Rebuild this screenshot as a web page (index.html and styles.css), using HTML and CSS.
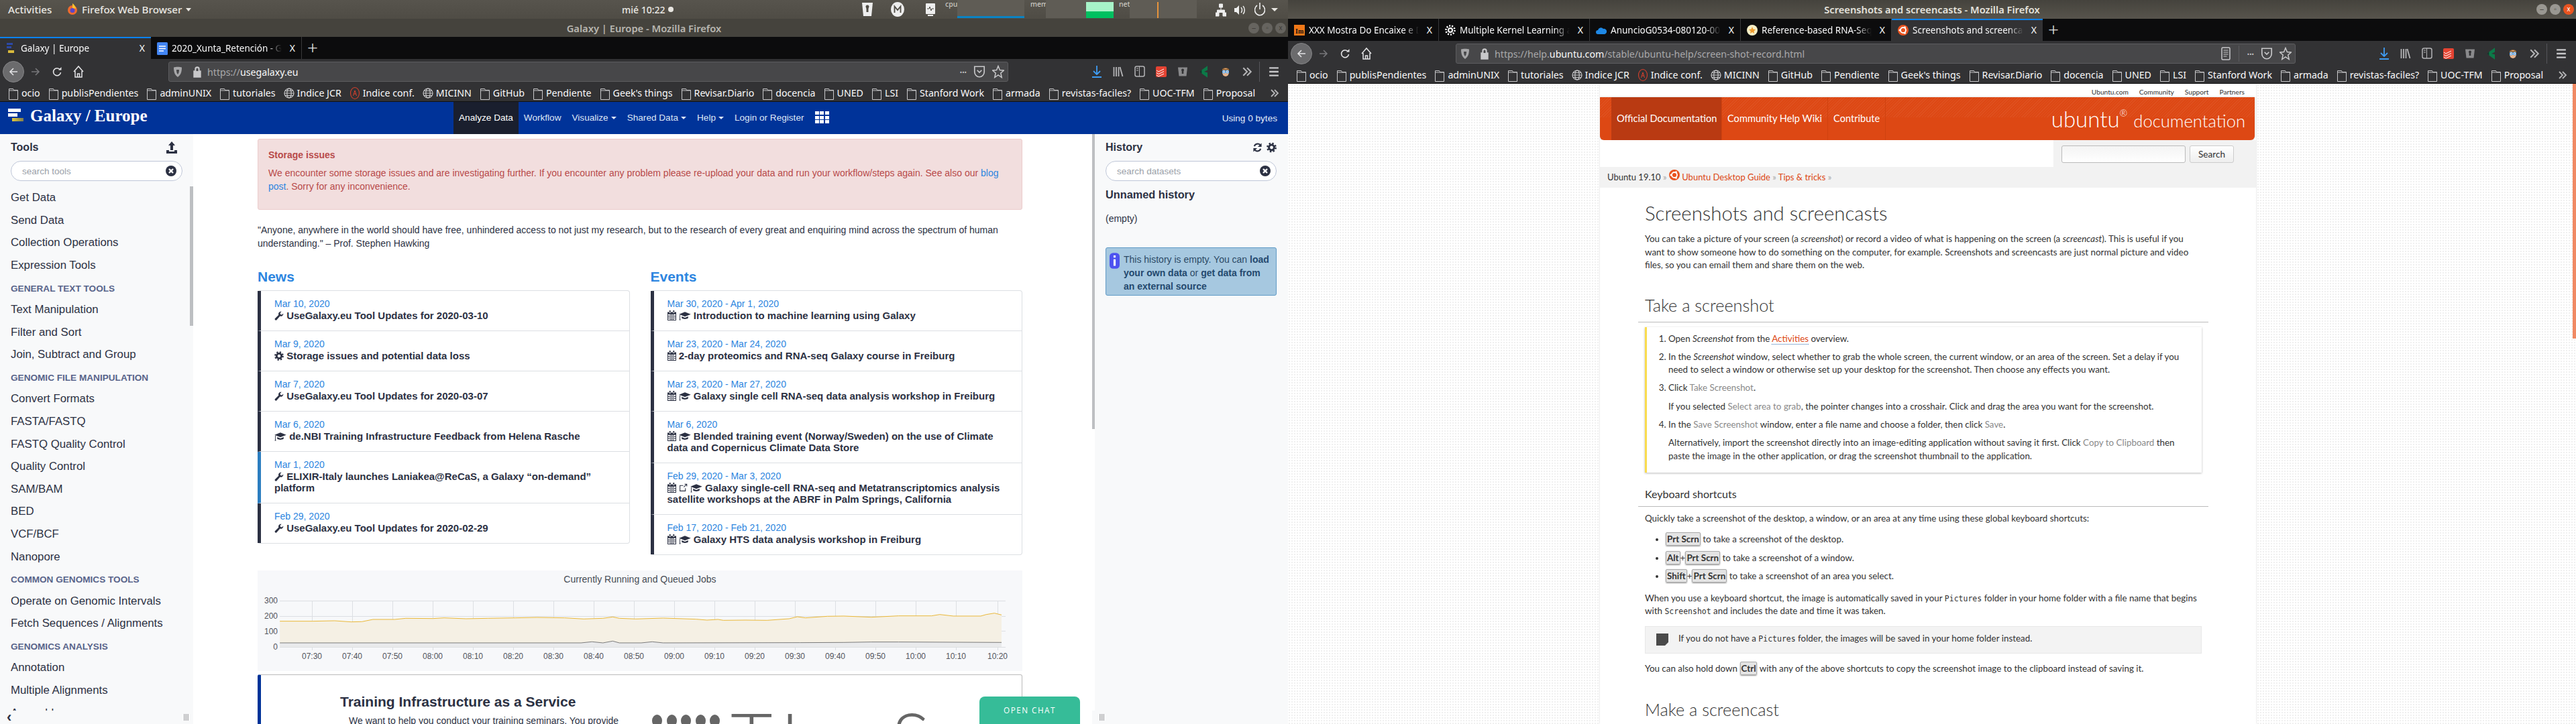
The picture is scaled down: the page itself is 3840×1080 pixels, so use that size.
FILE: index.html
```html
<!DOCTYPE html>
<html>
  <head>
    <meta charset="utf-8" />
    <title>Galaxy | Europe - Mozilla Firefox</title>
    <link rel="stylesheet" href="styles.css">
  </head>
  <body>
    <svg class="defs" width="0" height="0">
      <symbol id="folder" viewBox="0 0 16 20"><path d="M1.5 3.5h6l1 2h6v14h-13z M1.5 6h13" fill="none" stroke="#c8c8ca" stroke-width="1"/></symbol>
      <symbol id="globe" viewBox="0 0 16 20"><g fill="none" stroke="#c8c8ca" stroke-width="1.2"><circle cx="8" cy="10" r="7"/><ellipse cx="8" cy="10" rx="3.2" ry="7"/><path d="M1 10h14M2 6.5h12M2 13.5h12"/></g></symbol>
      <symbol id="conf" viewBox="0 0 16 20"><ellipse cx="8" cy="10" rx="6.5" ry="8.5" fill="none" stroke="#d8402c" stroke-width="1.1"/><path d="M5.5 14l2.5-8 2.5 8M6.5 11h3" fill="none" stroke="#d8402c"/></symbol>
      <symbol id="wrench" viewBox="0 0 16 16"><path d="M15.2 4.2a4.2 4.2 0 0 1-5.6 4.5L3.9 15a1.6 1.6 0 0 1-2.7-2.4l6.1-6A4.2 4.2 0 0 1 12.2.9L9.7 3.3l.7 2.4 2.3.6z"/></symbol>
      <symbol id="cog" viewBox="0 0 16 16"><circle cx="8" cy="8" r="4.2" fill="none" stroke="currentColor" stroke-width="3.2"/><circle cx="8" cy="8" r="6.6" fill="none" stroke="currentColor" stroke-width="2.6" stroke-dasharray="2.6 2.6"/></symbol>
      <symbol id="cap" viewBox="0 0 20 16"><path d="M0 5.5L10 1.5l10 4-10 4zM4.5 9v3c3 2.2 8 2.2 11 0V9L10 11.4zM1 6.5h1V13l.7 2.5H.3L1 13z"/></symbol>
      <symbol id="cal" viewBox="0 0 14 16"><path d="M0 2.5h14V16H0zM1 6v9h12V6zM4 6v9h1V6zM6.5 6v9h1V6zM9 6v9h1V6zM1 8.5h12v1H1zM1 11.5h12v1H1zM3 0h2v4H3zM9 0h2v4H9z" fill-rule="evenodd"/></symbol>
      <symbol id="ext" viewBox="0 0 16 16"><path d="M12 9v5H2V4h6M9 7l5.5-5.5M10.5 1.5h4v4" fill="none" stroke="currentColor" stroke-width="1.3"/></symbol>
      <symbol id="clear" viewBox="0 0 16 16"><circle cx="8" cy="8" r="8"/><path d="M5 5l6 6M11 5l-6 6" stroke="#fff" stroke-width="2.4"/></symbol>
      <symbol id="back" viewBox="0 0 16 16"><path d="M14 8H3M8 3L3 8l5 5" fill="none" stroke="currentColor" stroke-width="1.6"/></symbol>
      <symbol id="reload" viewBox="0 0 16 16"><path d="M12.5 5A5.5 5.5 0 1 0 13.5 9" fill="none" stroke="currentColor" stroke-width="1.6"/><path d="M10 5.5h4.5V1z" fill="currentColor"/></symbol>
      <symbol id="home" viewBox="0 0 16 20"><path d="M1 10l7-8 7 8M3 9v9h10V9M6.5 18v-5h3v5" fill="none" stroke="currentColor" stroke-width="1.5"/></symbol>
      <symbol id="shield" viewBox="0 0 14 18"><path d="M1 2.5C4 1.5 10 1.5 13 2.5c0 6-1 11-6 14.5C2 13.5 1 8.5 1 2.5zM5 6h4c0 3-.5 5-2 7-1.5-2-2-4-2-7z" fill="#a6a6a8" fill-rule="evenodd"/></symbol>
      <symbol id="lock" viewBox="0 0 12 18"><path d="M1 8h10v9H1zM3 8V5a3 3 0 0 1 6 0v3" fill="#c8c8ca" stroke="#c8c8ca" stroke-width="1.4"/><path d="M4.5 8V5a1.5 1.5 0 0 1 3 0v3z" fill="#474749"/></symbol>
      <symbol id="pocket" viewBox="0 0 16 18"><path d="M1.5 2h13v7a6.5 7 0 0 1-13 0zM5 7l3 3 3-3" fill="none" stroke="#c8c8ca" stroke-width="1.5"/></symbol>
      <symbol id="star" viewBox="0 0 18 20"><path d="M9 1.5l2.4 6 6 .5-4.6 4 1.4 6.5L9 15l-5.2 3.5L5.2 12 .6 8l6-.5z" fill="none" stroke="#c8c8ca" stroke-width="1.5"/></symbol>
      <symbol id="download" viewBox="0 0 16 20"><path d="M8 1v13M3 9l5 5 5-5" fill="none" stroke="#3f9cf2" stroke-width="1.8"/><path d="M1 18h14" stroke="#3f9cf2" stroke-width="2"/></symbol>
      <symbol id="library" viewBox="0 0 16 20"><path d="M1.5 3v14M5 3v14M8.5 3v14M10.5 3l4 14" fill="none" stroke="#b4b4b6" stroke-width="1.8"/></symbol>
      <symbol id="sidebar" viewBox="0 0 16 20"><rect x="1" y="2" width="14" height="15" rx="2.5" fill="none" stroke="#b4b4b6" stroke-width="1.5"/><path d="M7.5 2v15M3 5h3M3 8h3" stroke="#b4b4b6"/></symbol>
      <symbol id="todoist" viewBox="0 0 16 16"><rect width="16" height="16" rx="2" fill="#e44332"/><path d="M1 6l3 2 8-4M1 9.5l3 2 8-4M1 13l3 2 8-4" fill="none" stroke="#fff"/></symbol>
      <symbol id="keeper" viewBox="0 0 16 16"><path d="M1 1.5h14l-1.5 13h-11z" fill="#8a8a8c"/><path d="M6 5.5a2 2 0 1 1 4 0l-.7 2V11H6.7V7.5z" fill="#323234"/></symbol>
      <symbol id="leaf" viewBox="0 0 12 16"><path d="M10 1L3 6v4l7 5V9L6 8l4-2z" fill="#0c7a48"/><path d="M3 6L1 8l2 2z" fill="#0b3d2a"/></symbol>
      <symbol id="avatar" viewBox="0 0 16 18"><path d="M3 7C2 2 14 2 13 7v3H3z" fill="#a06a34"/><ellipse cx="8" cy="10" rx="5" ry="6" fill="#e8b48c"/><path d="M3 5h10v3H3z" fill="#a06a34"/><circle cx="5.5" cy="9" r="2.2" fill="#fff" stroke="#3f9cf2"/><circle cx="10.5" cy="9" r="2.2" fill="#fff" stroke="#3f9cf2"/><circle cx="5.5" cy="9" r=".8" fill="#246"/><circle cx="10.5" cy="9" r=".8" fill="#246"/></symbol>
      <symbol id="more" viewBox="0 0 14 16"><path d="M2 3l5 5-5 5M7 3l5 5-5 5" fill="none" stroke="#b4b4b6" stroke-width="1.8"/></symbol>
      <symbol id="menu" viewBox="0 0 14 16"><path d="M1 3h12M1 8h12M1 13h12" stroke="#c8c8ca" stroke-width="2"/></symbol>
      <symbol id="glogo" viewBox="0 0 24 20"><path d="M0 0h19v5H0z" fill="#fff"/><path d="M0 7h14v5H0z" fill="#fff"/><path d="M6 14h17v5H6z" fill="url(#gold)"/></symbol>
      <symbol id="gfav" viewBox="0 0 16 20"><path d="M1 2h9v3H1z" fill="#2c49a8"/><path d="M1 7h7v3H1z" fill="#2c49a8"/><path d="M3 13h9v4H3z" fill="#d8b93c"/></symbol>
      <symbol id="ubu" viewBox="0 0 16 16"><circle cx="8" cy="8" r="8" fill="#e95420"/><circle cx="8" cy="8" r="4" fill="none" stroke="#fff" stroke-width="1.8"/><circle cx="3" cy="8" r="1.5" fill="#fff"/><circle cx="10.5" cy="3.7" r="1.5" fill="#fff"/><circle cx="10.5" cy="12.3" r="1.5" fill="#fff"/></symbol>
      <linearGradient id="gold" x1="0" x2="1"><stop offset="0" stop-color="#e4c83c"/><stop offset="1" stop-color="#7f7f50"/></linearGradient>
    </svg>

    <div class="desktop">
      <!-- left half: galaxy -->
      <div class="screen">
        <div class="panel">
          <span class="panel-item">Activities</span>
          <span class="panel-app">
            <svg class="panel-fox" viewBox="0 0 16 20"><circle cx="8" cy="11" r="7" fill="#ee6b2f"/><circle cx="8" cy="11.5" r="3.5" fill="#5a46c8"/><path d="M8 1c3 2 5 5 5 8l-5-1z" fill="#fbc02d"/></svg>
            Firefox Web Browser <i class="caret caret-panel"></i>
          </span>
          <span class="panel-clock">mié 10:22 <i class="dot"></i></span>
          <span class="tray">
            <svg class="tray-icon" viewBox="0 0 18 24"><path d="M1 2h16l-2 20H3z" fill="#eee"/><path d="M6.5 8a2.5 2.5 0 1 1 5 0l-1 3v5h-3v-5z" fill="#4f4c45"/></svg>
            <svg class="tray-icon tray-m" viewBox="0 0 20 24"><ellipse cx="10" cy="12" rx="10" ry="11" fill="#eee"/><path d="M5.5 17V7.5L10 13l4.5-5.5V17" fill="none" stroke="#4f4c45" stroke-width="1.8"/></svg>
            <svg class="tray-icon tray-mon" viewBox="0 0 16 24"><rect x="1" y="3" width="14" height="16" rx="1" fill="#eee"/><path d="M3 11h3l1-3 2 6 1-3h3" fill="none" stroke="#4f4c45"/><path d="M4 21h8" stroke="#eee" stroke-width="2"/></svg>
            <span class="graph-label">cpu</span>
            <span class="graph graph-cpu"></span>
            <span class="graph-label">mem</span>
            <span class="graph graph-mem"></span>
            <span class="graph-label">net</span>
            <span class="graph graph-net"></span>
            <svg class="tray-icon tray-net" viewBox="0 0 16 20"><path d="M5.5 1h5v5h-5zM0 14h5v5H0zM11 14h5v5h-5zM8 6v4M2.5 14v-4h11v4" fill="#eee" stroke="#eee"/></svg>
            <svg class="tray-icon tray-vol" viewBox="0 0 16 20"><path d="M0 7h3l4-4v14l-4-4H0z" fill="#eee"/><path d="M10 6c2 2 2 6 0 8M13 4c3 3 3 9 0 12" fill="none" stroke="#eee" stroke-width="1.5"/></svg>
            <svg class="tray-icon tray-pow" viewBox="0 0 16 24"><path d="M8 2v10M4 6a7.5 8 0 1 0 8 0" fill="none" stroke="#eee" stroke-width="1.6"/></svg>
            <i class="caret caret-tray"></i>
          </span>
        </div>
        <div class="titlebar titlebar-off">
          <span class="titlebar-text">Galaxy | Europe - Mozilla Firefox</span>
          <span class="wbtns"><i class="wbtn">–</i><i class="wbtn">▫</i><i class="wbtn">x</i></span>
        </div>
        <div class="tabs">
          <div class="tab tab-on"><svg class="tab-icon"><use href="#gfav"/></svg><span class="tab-title">Galaxy | Europe</span><span class="tab-x">X</span></div>
          <div class="tab"><svg class="tab-icon" viewBox="0 0 16 20"><rect y="1" width="16" height="19" rx="1.5" fill="#4285f4"/><path d="M3 7h10M3 10.5h10M3 14h7" stroke="#fff" stroke-width="1.5"/></svg><span class="tab-title">2020_Xunta_Retención - Go</span><span class="tab-x">X</span></div>
          <span class="tab-new">+</span>
        </div>
        <div class="nav">
          <span class="nav-back"><svg class="nav-icon"><use href="#back"/></svg></span>
          <svg class="nav-icon nav-fwd"><use href="#back"/></svg>
          <svg class="nav-icon"><use href="#reload"/></svg>
          <svg class="nav-icon"><use href="#home"/></svg>
          <div class="urlbar">
            <svg class="url-shield"><use href="#shield"/></svg>
            <svg class="url-lock"><use href="#lock"/></svg>
            <span class="url-text">https://<b>usegalaxy.eu</b></span>
            <span class="url-actions"><span class="url-dots">•••</span><svg class="url-act"><use href="#pocket"/></svg><svg class="url-act"><use href="#star"/></svg></span>
          </div>
          <div class="toolbar">
            <svg class="tool-btn"><use href="#download"/></svg>
            <svg class="tool-btn"><use href="#library"/></svg>
            <svg class="tool-btn"><use href="#sidebar"/></svg>
            <svg class="tool-btn"><use href="#todoist"/></svg>
            <svg class="tool-btn"><use href="#keeper"/></svg>
            <svg class="tool-btn"><use href="#leaf"/></svg>
            <svg class="tool-btn"><use href="#avatar"/></svg>
            <svg class="tool-btn"><use href="#more"/></svg>
            <i class="tool-sep"></i>
            <svg class="tool-btn tool-menu"><use href="#menu"/></svg>
          </div>
        </div>
        <div class="bookmarks">
          <span class="bm"><svg><use href="#folder"/></svg>ocio</span>
          <span class="bm"><svg><use href="#folder"/></svg>publisPendientes</span>
          <span class="bm"><svg><use href="#folder"/></svg>adminUNIX</span>
          <span class="bm"><svg><use href="#folder"/></svg>tutoriales</span>
          <span class="bm"><svg><use href="#globe"/></svg>Indice JCR</span>
          <span class="bm"><svg><use href="#conf"/></svg>Indice conf.</span>
          <span class="bm"><svg><use href="#globe"/></svg>MICINN</span>
          <span class="bm"><svg><use href="#folder"/></svg>GitHub</span>
          <span class="bm"><svg><use href="#folder"/></svg>Pendiente</span>
          <span class="bm"><svg><use href="#folder"/></svg>Geek's things</span>
          <span class="bm"><svg><use href="#folder"/></svg>Revisar.Diario</span>
          <span class="bm"><svg><use href="#folder"/></svg>docencia</span>
          <span class="bm"><svg><use href="#folder"/></svg>UNED</span>
          <span class="bm"><svg><use href="#folder"/></svg>LSI</span>
          <span class="bm"><svg><use href="#folder"/></svg>Stanford Work</span>
          <span class="bm"><svg><use href="#folder"/></svg>armada</span>
          <span class="bm"><svg><use href="#folder"/></svg>revistas-faciles?</span>
          <span class="bm"><svg><use href="#folder"/></svg>UOC-TFM</span>
          <span class="bm"><svg><use href="#folder"/></svg>Proposal</span>
          <svg class="bm-more"><use href="#more"/></svg>
        </div>

        <div class="masthead">
          <svg class="gx-logo"><use href="#glogo"/></svg>
          <span class="gx-brand">Galaxy / Europe</span>
          <a class="mh-link mh-active">Analyze Data</a>
          <a class="mh-link">Workflow</a>
          <a class="mh-link">Visualize<i class="caret"></i></a>
          <a class="mh-link">Shared Data<i class="caret"></i></a>
          <a class="mh-link">Help<i class="caret"></i></a>
          <a class="mh-link">Login or Register</a>
          <span class="mh-grid"><i></i><i></i><i></i><i></i><i></i><i></i><i></i><i></i><i></i></span>
          <span class="mh-quota">Using 0 bytes</span>
        </div>

        <div class="gx-body">
          <div class="side side-tools">
            <div class="side-head"><b>Tools</b>
              <svg class="side-upload" viewBox="0 0 16 18"><path d="M8 0l5 6H10v7H6V6H3zM0 13h4v2h8v-2h4v5H0z" fill="#2c3143"/></svg>
            </div>
            <div class="search"><span>search tools</span><svg class="search-x"><use href="#clear"/></svg></div>
            <div class="tool-list">
              <div class="tool-item">Get Data</div>
              <div class="tool-item">Send Data</div>
              <div class="tool-item">Collection Operations</div>
              <div class="tool-item">Expression Tools</div>
              <div class="tool-label">GENERAL TEXT TOOLS</div>
              <div class="tool-item">Text Manipulation</div>
              <div class="tool-item">Filter and Sort</div>
              <div class="tool-item">Join, Subtract and Group</div>
              <div class="tool-label">GENOMIC FILE MANIPULATION</div>
              <div class="tool-item">Convert Formats</div>
              <div class="tool-item">FASTA/FASTQ</div>
              <div class="tool-item">FASTQ Quality Control</div>
              <div class="tool-item">Quality Control</div>
              <div class="tool-item">SAM/BAM</div>
              <div class="tool-item">BED</div>
              <div class="tool-item">VCF/BCF</div>
              <div class="tool-item">Nanopore</div>
              <div class="tool-label">COMMON GENOMICS TOOLS</div>
              <div class="tool-item">Operate on Genomic Intervals</div>
              <div class="tool-item">Fetch Sequences / Alignments</div>
              <div class="tool-label">GENOMICS ANALYSIS</div>
              <div class="tool-item">Annotation</div>
              <div class="tool-item">Multiple Alignments</div>
              <div class="tool-item">Assembly</div>
            </div>
            <i class="side-thumb"></i>
            <div class="side-foot"><span class="side-arrow">‹</span><span class="side-handle"></span></div>
          </div>

          <div class="main">
            <div class="alert">
              <h4>Storage issues</h4>
              <p>We encounter some storage issues and are investigating further. If you encounter any problem please re-upload your data and run your workflow/steps again. See also our <a>blog post</a>. Sorry for any inconvenience.</p>
            </div>
            <p class="quote">"Anyone, anywhere in the world should have free, unhindered access to not just my research, but to the research of every great and enquiring mind across the spectrum of human understanding." – Prof. Stephen Hawking</p>
            <div class="columns">
              <div>
                <h2 class="col-title">News</h2>
                <div class="feed">
                  <div class="feed-item"><a>Mar 10, 2020</a><b><svg class="ic"><use href="#wrench"/></svg> UseGalaxy.eu Tool Updates for 2020-03-10</b></div>
                  <div class="feed-item"><a>Mar 9, 2020</a><b><svg class="ic"><use href="#cog"/></svg> Storage issues and potential data loss</b></div>
                  <div class="feed-item"><a>Mar 7, 2020</a><b><svg class="ic"><use href="#wrench"/></svg> UseGalaxy.eu Tool Updates for 2020-03-07</b></div>
                  <div class="feed-item"><a>Mar 6, 2020</a><b><svg class="ic ic-cap"><use href="#cap"/></svg> de.NBI Training Infrastructure Feedback from Helena Rasche</b></div>
                  <div class="feed-item feed-blue"><a>Mar 1, 2020</a><b><svg class="ic"><use href="#wrench"/></svg> ELIXIR-Italy launches Laniakea@ReCaS, a Galaxy “on-demand” platform</b></div>
                  <div class="feed-item"><a>Feb 29, 2020</a><b><svg class="ic"><use href="#wrench"/></svg> UseGalaxy.eu Tool Updates for 2020-02-29</b></div>
                </div>
              </div>
              <div>
                <h2 class="col-title">Events</h2>
                <div class="feed">
                  <div class="feed-item"><a>Mar 30, 2020 - Apr 1, 2020</a><b><svg class="ic ic-cal"><use href="#cal"/></svg> <svg class="ic ic-cap"><use href="#cap"/></svg> Introduction to machine learning using Galaxy</b></div>
                  <div class="feed-item"><a>Mar 23, 2020 - Mar 24, 2020</a><b><svg class="ic ic-cal"><use href="#cal"/></svg> 2-day proteomics and RNA-seq Galaxy course in Freiburg</b></div>
                  <div class="feed-item"><a>Mar 23, 2020 - Mar 27, 2020</a><b><svg class="ic ic-cal"><use href="#cal"/></svg> <svg class="ic ic-cap"><use href="#cap"/></svg> Galaxy single cell RNA-seq data analysis workshop in Freiburg</b></div>
                  <div class="feed-item"><a>Mar 6, 2020</a><b><svg class="ic ic-cal"><use href="#cal"/></svg> <svg class="ic ic-cap"><use href="#cap"/></svg> Blended training event (Norway/Sweden) on the use of Climate data and Copernicus Climate Data Store</b></div>
                  <div class="feed-item"><a>Feb 29, 2020 - Mar 3, 2020</a><b><svg class="ic ic-cal"><use href="#cal"/></svg> <svg class="ic ic-cal"><use href="#ext"/></svg> <svg class="ic ic-cap"><use href="#cap"/></svg> Galaxy single-cell RNA-seq and Metatranscriptomics analysis satellite workshops at the ABRF in Palm Springs, California</b></div>
                  <div class="feed-item"><a>Feb 17, 2020 - Feb 21, 2020</a><b><svg class="ic ic-cal"><use href="#cal"/></svg> <svg class="ic ic-cap"><use href="#cap"/></svg> Galaxy HTS data analysis workshop in Freiburg</b></div>
                </div>
              </div>
            </div>

            <div class="chart">
              <div class="chart-title">Currently Running and Queued Jobs</div>
              <svg class="chart-svg" viewBox="0 26 1140 124" width="1140" height="124">
                <g stroke="#dcdfe3" stroke-width="1">
                  <path d="M33 45.5H1115M33 68.5H1115M33 90.5H1115M33 114.5H1115"/>
                  <path d="M81.5 45v74M141.5 45v74M201.5 45v74M261.5 45v74M321.5 45v74M381.5 45v74M441.5 45v74M501.5 45v74M561.5 45v74M621.5 45v74M681.5 45v74M741.5 45v74M801.5 45v74M861.5 45v74M921.5 45v74M981.5 45v74M1041.5 45v74M1103.5 45v74"/>
                </g>
                <g transform="translate(-24,-11) scale(.8163,.3333)">
                  <path d="M70 260L130 260 170 258 200 263 220 262 240 252 280 252 300 247 350 248 370 245 410 249 450 247 500 245 540 243 590 245 625 250 660 247 678 241 690 247 720 250 770 246 830 251 850 255 870 252 880 256 920 255 960 256 1000 249 1015 240 1030 245 1070 238 1100 237 1150 242 1200 236 1260 236 1275 230 1300 237 1350 237 1360 230 1375 224 1388 232V374H70Z" fill="#f5f0e4"/>
                  <path d="M70 357H620L640 352 660 357 678 349 690 357 730 357 750 352 770 357 1020 356 1100 355 1150 353 1200 353 1388 355V374H70Z" fill="#e9eaec"/>
                  <path d="M70 260L130 260 170 258 200 263 220 262 240 252 280 252 300 247 350 248 370 245 410 249 450 247 500 245 540 243 590 245 625 250 660 247 678 241 690 247 720 250 770 246 830 251 850 255 870 252 880 256 920 255 960 256 1000 249 1015 240 1030 245 1070 238 1100 237 1150 242 1200 236 1260 236 1275 230 1300 237 1350 237 1360 230 1375 224 1388 232" fill="none" stroke="#eab839" stroke-width="1" vector-effect="non-scaling-stroke"/>
                  <path d="M70 357H620L640 352 660 357 678 349 690 357 730 357 750 352 770 357 1020 356 1100 355 1150 353 1200 353 1388 355" fill="none" stroke="#7b7b7b" stroke-width="1" vector-effect="non-scaling-stroke"/>
                </g>
                <g class="chart-y" text-anchor="end">
                  <text x="30" y="49">300</text><text x="30" y="72">200</text><text x="30" y="95">100</text><text x="30" y="118">0</text>
                </g>
                <g class="chart-x" text-anchor="middle">
                  <text x="81" y="132">07:30</text><text x="141" y="132">07:40</text><text x="201" y="132">07:50</text><text x="261" y="132">08:00</text><text x="321" y="132">08:10</text><text x="381" y="132">08:20</text><text x="441" y="132">08:30</text><text x="501" y="132">08:40</text><text x="561" y="132">08:50</text><text x="621" y="132">09:00</text><text x="681" y="132">09:10</text><text x="741" y="132">09:20</text><text x="801" y="132">09:30</text><text x="861" y="132">09:40</text><text x="921" y="132">09:50</text><text x="981" y="132">10:00</text><text x="1041" y="132">10:10</text><text x="1103" y="132">10:20</text>
                </g>
              </svg>
            </div>

            <div class="promo">
              <div class="promo-text">
                <h3>Training Infrastructure as a Service</h3>
                <p>We want to help you conduct your training seminars. You provide</p>
              </div>
              <div class="promo-logo">
                <span class="promo-dots"><i></i><i></i><i></i><i></i><i></i></span>
                <span class="promo-word">TIaaS</span>
              </div>
            </div>
            <span class="chat-btn">OPEN CHAT</span>
          </div>

          <div class="side side-history">
            <i class="hist-thumb"></i>
            <div class="side-head"><b>History</b>
              <span class="side-tools-icons">
                <svg viewBox="0 0 16 16" class="hist-ic"><path d="M13 5A5.5 5.5 0 0 0 3 6M3 11a5.5 5.5 0 0 0 10-1" fill="none" stroke="#2c3143" stroke-width="2.2"/><path d="M14.5 1v6h-6zM1.5 15V9h6z" fill="#2c3143"/></svg>
                <svg class="hist-ic"><use href="#cog"/></svg>
              </span>
            </div>
            <div class="search"><span>search datasets</span><svg class="search-x"><use href="#clear"/></svg></div>
            <div class="hist-name">Unnamed history</div>
            <div class="hist-empty">(empty)</div>
            <div class="hist-info">
              <svg class="hist-i" viewBox="0 0 14 22"><rect width="14" height="22" rx="5" fill="#4d52f0"/><path d="M7 3.5v3M7 9v9" stroke="#fff" stroke-width="3"/></svg>
              <div>This history is empty. You can <b>load your own data</b> or <b>get data from an external source</b></div>
            </div>
            <div class="side-foot side-foot-r"><span class="side-handle"></span></div>
          </div>
        </div>
      </div>

      <!-- right half: ubuntu help -->
      <div class="screen">
        <div class="titlebar titlebar-on">
          <span class="titlebar-text">Screenshots and screencasts - Mozilla Firefox</span>
          <span class="wbtns"><i class="wbtn">–</i><i class="wbtn">▫</i><i class="wbtn wbtn-close">x</i></span>
        </div>
        <div class="tabs">
          <div class="tab"><svg class="tab-icon" viewBox="0 0 16 20"><rect y="2" width="16" height="16" fill="#f07818"/><text x="2" y="15" font-size="10" font-family="Liberation Serif" font-weight="bold" fill="#111">Im</text></svg><span class="tab-title">XXX Mostra Do Encaixe e Da</span><span class="tab-x">X</span></div>
          <div class="tab"><svg class="tab-icon" viewBox="0 0 16 16"><circle cx="8" cy="8" r="4" fill="#fff"/><circle cx="8" cy="8" r="6.5" fill="none" stroke="#fff" stroke-width="2.6" stroke-dasharray="2 2"/><circle cx="8" cy="8" r="2" fill="#222"/></svg><span class="tab-title">Multiple Kernel Learning al</span><span class="tab-x">X</span></div>
          <div class="tab"><svg class="tab-icon" viewBox="0 0 16 16"><path d="M3 14a3 3 0 0 1 0-6 4.5 4.5 0 0 1 8-2 4 4 0 0 1 2 8z" fill="#1e88e5"/></svg><span class="tab-title">AnuncioG0534-080120-0001</span><span class="tab-x">X</span></div>
          <div class="tab"><svg class="tab-icon" viewBox="0 0 16 16"><circle cx="8" cy="8" r="8" fill="#f6efc6"/><path d="M8 3l1.5 3.5L13 7l-2.5 2.5.6 3.5L8 11l-3 2 .6-3.5L3 7l3.5-.5z" fill="#ef9b2d"/></svg><span class="tab-title">Reference-based RNA-Seq a</span><span class="tab-x">X</span></div>
          <div class="tab tab-on"><svg class="tab-icon tab-ubu"><use href="#ubu"/></svg><span class="tab-title">Screenshots and screencasts</span><span class="tab-x">X</span></div>
          <span class="tab-new">+</span>
        </div>
        <div class="nav nav-right">
          <span class="nav-back"><svg class="nav-icon"><use href="#back"/></svg></span>
          <svg class="nav-icon nav-fwd"><use href="#back"/></svg>
          <svg class="nav-icon"><use href="#reload"/></svg>
          <svg class="nav-icon"><use href="#home"/></svg>
          <div class="urlbar">
            <svg class="url-shield"><use href="#shield"/></svg>
            <svg class="url-lock"><use href="#lock"/></svg>
            <span class="url-text">https://help.<b>ubuntu.com</b>/stable/ubuntu-help/screen-shot-record.html</span>
            <span class="url-actions">
              <svg class="url-act url-reader" viewBox="0 0 14 20"><rect x="1" y="1" width="12" height="18" rx="1.5" fill="none" stroke="#c8c8ca" stroke-width="1.5"/><path d="M3.5 5h7M3.5 8h7M3.5 11h7M3.5 14h5" stroke="#c8c8ca"/></svg>
              <i class="url-sep"></i>
              <span class="url-dots">•••</span><svg class="url-act"><use href="#pocket"/></svg><svg class="url-act"><use href="#star"/></svg>
            </span>
          </div>
          <div class="toolbar">
            <svg class="tool-btn"><use href="#download"/></svg>
            <svg class="tool-btn"><use href="#library"/></svg>
            <svg class="tool-btn"><use href="#sidebar"/></svg>
            <svg class="tool-btn"><use href="#todoist"/></svg>
            <svg class="tool-btn"><use href="#keeper"/></svg>
            <svg class="tool-btn"><use href="#leaf"/></svg>
            <svg class="tool-btn"><use href="#avatar"/></svg>
            <svg class="tool-btn"><use href="#more"/></svg>
            <i class="tool-sep"></i>
            <svg class="tool-btn tool-menu"><use href="#menu"/></svg>
          </div>
        </div>
        <div class="bookmarks">
          <span class="bm"><svg><use href="#folder"/></svg>ocio</span>
          <span class="bm"><svg><use href="#folder"/></svg>publisPendientes</span>
          <span class="bm"><svg><use href="#folder"/></svg>adminUNIX</span>
          <span class="bm"><svg><use href="#folder"/></svg>tutoriales</span>
          <span class="bm"><svg><use href="#globe"/></svg>Indice JCR</span>
          <span class="bm"><svg><use href="#conf"/></svg>Indice conf.</span>
          <span class="bm"><svg><use href="#globe"/></svg>MICINN</span>
          <span class="bm"><svg><use href="#folder"/></svg>GitHub</span>
          <span class="bm"><svg><use href="#folder"/></svg>Pendiente</span>
          <span class="bm"><svg><use href="#folder"/></svg>Geek's things</span>
          <span class="bm"><svg><use href="#folder"/></svg>Revisar.Diario</span>
          <span class="bm"><svg><use href="#folder"/></svg>docencia</span>
          <span class="bm"><svg><use href="#folder"/></svg>UNED</span>
          <span class="bm"><svg><use href="#folder"/></svg>LSI</span>
          <span class="bm"><svg><use href="#folder"/></svg>Stanford Work</span>
          <span class="bm"><svg><use href="#folder"/></svg>armada</span>
          <span class="bm"><svg><use href="#folder"/></svg>revistas-faciles?</span>
          <span class="bm"><svg><use href="#folder"/></svg>UOC-TFM</span>
          <span class="bm"><svg><use href="#folder"/></svg>Proposal</span>
          <svg class="bm-more"><use href="#more"/></svg>
        </div>

        <div class="help">
          <div class="help-page">
            <div class="help-top">
              <a>Ubuntu.com</a><a>Community</a><a>Support</a><a>Partners</a>
            </div>
            <div class="help-bar">
              <a class="hb-link hb-active">Official Documentation</a>
              <a class="hb-link">Community Help Wiki</a>
              <a class="hb-link">Contribute</a>
              <span class="hb-brand">ubuntu<sup>®</sup> <small>documentation</small></span>
            </div>
            <div class="help-search">
              <span class="hs-blank"></span>
              <span class="hs-form"><i class="hs-input"></i><span class="hs-btn">Search</span></span>
            </div>
            <div class="crumbs">Ubuntu 19.10 <em>»</em> <svg class="crumb-ubu"><use href="#ubu"/></svg> <a>Ubuntu Desktop Guide</a> <em>»</em> <a>Tips &amp; tricks</a> <em>»</em></div>
            <div class="article">
              <h1>Screenshots and screencasts</h1>
              <p class="lead">You can take a picture of your screen (a <i>screenshot</i>) or record a video of what is happening on the screen (a <i>screencast</i>). This is useful if you want to show someone how to do something on the computer, for example. Screenshots and screencasts are just normal picture and video files, so you can email them and share them on the web.</p>
              <h2>Take a screenshot</h2>
              <ol class="steps">
                <li>Open <i>Screenshot</i> from the <a class="act">Activities</a> overview.</li>
                <li>In the <i>Screenshot</i> window, select whether to grab the whole screen, the current window, or an area of the screen. Set a delay if you need to select a window or otherwise set up your desktop for the screenshot. Then choose any effects you want.</li>
                <li>Click <span class="ui">Take Screenshot</span>.
                  <p>If you selected <span class="ui">Select area to grab</span>, the pointer changes into a crosshair. Click and drag the area you want for the screenshot.</p></li>
                <li>In the <span class="ui">Save Screenshot</span> window, enter a file name and choose a folder, then click <span class="ui">Save</span>.
                  <p>Alternatively, import the screenshot directly into an image-editing application without saving it first. Click <span class="ui">Copy to Clipboard</span> then paste the image in the other application, or drag the screenshot thumbnail to the application.</p></li>
              </ol>
              <h3>Keyboard shortcuts</h3>
              <p class="quick">Quickly take a screenshot of the desktop, a window, or an area at any time using these global keyboard shortcuts:</p>
              <ul class="keys">
                <li><kbd>Prt Scrn</kbd> to take a screenshot of the desktop.</li>
                <li><kbd>Alt</kbd>+<kbd>Prt Scrn</kbd> to take a screenshot of a window.</li>
                <li><kbd>Shift</kbd>+<kbd>Prt Scrn</kbd> to take a screenshot of an area you select.</li>
              </ul>
              <p class="when">When you use a keyboard shortcut, the image is automatically saved in your <code>Pictures</code> folder in your home folder with a file name that begins with <code>Screenshot</code> and includes the date and time it was taken.</p>
              <div class="note"><svg class="note-ic" viewBox="0 0 18 18"><path d="M0 0h18v13l-5 5H0z" fill="#4a4a4a"/></svg>If you do not have a <code>Pictures</code> folder, the images will be saved in your home folder instead.</div>
              <p class="also">You can also hold down <kbd>Ctrl</kbd> with any of the above shortcuts to copy the screenshot image to the clipboard instead of saving it.</p>
              <h2 class="h2-cast">Make a screencast</h2>
            </div>
          </div>
          <i class="help-thumb"></i>
        </div>
      </div>
    </div>
  </body>
</html>
```

FILE: styles.css
```css
* { box-sizing: border-box; }
html, body { margin: 0; height: 1080px; overflow: hidden; }
body { font-family: "Liberation Sans", Arial, sans-serif; background: #2c2c2c; }
.defs { position: absolute; }
.desktop { display: flex; width: 3840px; height: 1080px; }
.screen { width: 1920px; height: 1080px; display: flex; flex-direction: column; overflow: hidden; position: relative; }

/* gnome panel */
.panel {
  height: 28px; display: flex; align-items: center; flex: none;
  background: linear-gradient(#57544d, #4f4c45);
  color: #e8e6e1; font: 500 15.2px "Noto Sans", sans-serif;
}
.panel-item { margin-left: 12px; width: 88px; }
.panel-app { display: flex; align-items: center; width: 191px; }
.panel-fox { width: 16px; height: 20px; margin-right: 6px; }
.panel-clock { margin-left: 636px; width: 357px; display: flex; align-items: center; gap: 4px; font-size: 14px; }
.dot { width: 8px; height: 8px; border-radius: 50%; background: #e8e6e1; }
.caret { display: inline-block; border: 4px solid transparent; border-top-color: currentColor; border-bottom: 0; margin-left: 4px; vertical-align: middle; }
.caret-panel { margin-left: 6px; border-width: 5px 4px 0; }
.tray { display: flex; align-items: flex-start; height: 28px; }
.tray-icon { width: 18px; height: 24px; margin-top: 2px; flex: none; }
.tray-m { width: 20px; margin-left: 26px; }
.tray-mon { width: 16px; margin-left: 31px; }
.graph-label { width: 16px; margin-left: 14px; font-size: 10.5px; line-height: 12px; color: #c9c7c0; }
.graph { display: block; width: 100px; height: 27px; margin-left: 2px; background: #5f5c55; }
.graph-cpu { background: linear-gradient(#0a83c4, #0a83c4) bottom / 100% 3px no-repeat, #5f5c55; }
.graph-mem { width: 101px; background: linear-gradient(#a7f3c8 58%, #00c060 58%) right 3px / 41px 24px no-repeat, #5f5c55; }
.graph-net { background: linear-gradient(#e6933c, #e6933c) 41px bottom / 2px 24px no-repeat, #5f5c55; }
.graph-cpu + .graph-label { margin-left: 9px; width: 21px; }
.graph-mem + .graph-label { margin-left: 8px; width: 14px; }
.tray-net { width: 16px; height: 20px; margin: 5px 0 0 28px; }
.tray-vol { width: 16px; height: 20px; margin: 5px 0 0 12px; }
.tray-pow { width: 16px; margin-left: 14px; }
.caret-tray { margin: 12px 0 0 9px; border-width: 5px 5px 0; color: #e8e6e1; }

/* window chrome */
.titlebar {
  flex: none; display: flex; align-items: center; justify-content: center; position: relative;
  font: 600 14.7px "Noto Sans", sans-serif;
}
.titlebar-off { height: 27px; background: #45433d; color: #b8b6b0; }
.titlebar-on { height: 28px; background: linear-gradient(#45433d, #57544c); color: #e4e2dc; }
.wbtns { position: absolute; right: 3px; display: flex; gap: 4px; }
.wbtn { width: 16px; height: 16px; border-radius: 50%; background: #66645f; color: #3c3a36; font: 10px/16px "Liberation Sans", sans-serif; text-align: center; }
.titlebar-on .wbtn { background: #9a9892; }
.titlebar-on .wbtn-close { background: #e95420; color: #fff; }
.tabs { flex: none; height: 33px; display: flex; background: #0c0c0d; }
.tab {
  width: 225px; height: 33px; display: flex; align-items: center; padding: 0 9px;
  color: #f9f9fa; font: 13.5px "Noto Sans", sans-serif; position: relative;
  border-right: 1px solid #38383a;
}
.tab-on { background: #323234; border-right: 0; box-shadow: inset 0 2px 0 #0a84ff; }
.tab-icon { width: 16px; height: 20px; flex: none; margin-right: 6px; }
.tab-ubu { height: 16px; }
.tab-title { flex: 1; white-space: nowrap; overflow: hidden; -webkit-mask-image: linear-gradient(to left, transparent, #000 22px); }
.tab-x { width: 14px; margin-left: 6px; font-size: 14px; text-align: right; }
.tab-new { color: #e0e0e2; font: 300 28px/30px "Noto Sans", sans-serif; margin-left: 8px; }

.nav { flex: none; height: 38px; display: flex; align-items: center; background: #323234; color: #c8c8ca; }
.nav-back { width: 32px; height: 32px; border-radius: 50%; background: #6b6b6d; margin-left: 4px; display: flex; align-items: center; justify-content: center; border: 1px solid #858587; }
.nav svg.nav-icon { width: 16px; height: 20px; margin-left: 16px; color: #e4e4e6; }
.nav-back svg.nav-icon { margin-left: 0; }
.nav svg.nav-fwd { margin-left: 9px; color: #77777a; transform: scaleX(-1); }
.urlbar {
  width: 1252px; height: 30px; margin-left: 126px; display: flex; align-items: center;
  background: #474749; border: 1px solid #5c5c5f; border-radius: 3px; font: 14.2px "Noto Sans", sans-serif; color: #a9a9ab;
}
.nav-right .urlbar { margin-left: 125px; }
.url-shield { width: 14px; height: 18px; margin-left: 6px; }
.url-lock { width: 12px; height: 18px; margin-left: 16px; }
.url-text { margin-left: 9px; white-space: nowrap; }
.url-text b { font-weight: 400; color: #f9f9fa; }
.url-actions { margin-left: auto; display: flex; align-items: center; gap: 10px; padding-right: 5px; }
.url-dots { font-size: 9px; color: #c8c8ca; }
.url-act { width: 18px; height: 20px; }
.url-reader { width: 14px; }
.url-sep { width: 1px; height: 24px; background: #5c5c5f; margin: 0 2px; }
.toolbar { display: flex; align-items: center; margin-left: 124px; gap: 16px; }
.tool-btn { width: 16px; height: 20px; flex: none; }
.tool-sep { width: 1px; height: 30px; background: #55555a; margin-left: -6px; }
.tool-menu { margin-left: -3px; }
.bookmarks {
  flex: none; height: 26px; display: flex; align-items: center; gap: 12px; padding-left: 12px;
  background: #323234; border-bottom: 1px solid #111; color: #f9f9fa; font: 14.2px "Noto Sans", sans-serif;
}
.bm { display: flex; align-items: center; gap: 4px; white-space: nowrap; }
.bm svg { width: 16px; height: 20px; flex: none; }
.bm-more { width: 14px; height: 16px; margin-left: 10px; }

/* galaxy */
.masthead { flex: none; height: 48px; background: #003399; display: flex; align-items: center; color: #e4ecf8; font-size: 13.6px; }
.gx-logo { width: 24px; height: 20px; margin-left: 12px; margin-top: -8px; }
.gx-brand { font: bold 25px "Liberation Serif", serif; color: #fff; margin: -6px 0 0 9px; width: 631px; flex: none; }
.mh-link { height: 48px; line-height: 48px; padding: 0 8px; color: #dde6f5; white-space: nowrap; }
.mh-active { background: #1a1f2e; color: #fff; }
.mh-grid { display: grid; grid-template-columns: repeat(3, 6px); grid-auto-rows: 5px; gap: 1.5px; margin-left: 8px; margin-top: -2px; }
.mh-grid i { background: #fff; }
.mh-quota { margin-left: auto; margin-right: 16px; }

.gx-body { flex: 1; display: flex; min-height: 0; color: #2c3143; }
.side { background: #f8f9fa; position: relative; overflow: hidden; padding: 0 16px; }
.side-tools { width: 288px; }
.side-history { width: 292px; padding: 0 17px 0 20px; box-shadow: inset 4px 0 0 #fff; }
.hist-thumb { position: absolute; left: 0; top: 0; width: 4px; height: 440px; background: #bdbfc2; }
.side-head { display: flex; justify-content: space-between; align-items: center; height: 40px; font-size: 16px; }
.side-upload { width: 16px; height: 18px; margin-right: 8px; }
.side-tools-icons { display: flex; gap: 6px; }
.hist-ic { width: 15px; height: 16px; color: #2c3143; }
.search {
  height: 30px; border: 1px solid #bfc7d8; border-radius: 15px; background: #fff; display: flex; align-items: center;
  justify-content: space-between; padding: 0 1px 0 16px; color: #9aa0a8; font-size: 13.5px;
}
.search-x { width: 16px; height: 16px; margin-right: 7px; fill: #2c3143; }
.tool-list { margin-top: 8px; }
.tool-item { height: 33.65px; line-height: 33.65px; font-size: 16.8px; color: #2c3143; white-space: nowrap; }
.tool-label { height: 32.4px; padding-top: 10px; line-height: 16px; font-size: 13.6px; font-weight: bold; color: #58648a; text-transform: uppercase; }
.side-thumb { position: absolute; left: 283px; top: 78px; width: 5px; height: 208px; background: #bdbfc2; }
.side-foot { position: absolute; left: 0; right: 0; bottom: 0; height: 20px; background: #f8f9fa; display: flex; align-items: center; justify-content: space-between; padding: 0 6px 0 10px; }
.side-foot-r { justify-content: flex-start; padding-left: 11px; }
.side-arrow { font: bold 22px/18px "Liberation Sans", sans-serif; }
.side-handle { width: 8px; height: 10px; background: repeating-linear-gradient(90deg, #a6a6a8 0 1px, transparent 1px 2px); }

.main { width: 1340px; padding: 7px 104px 0 96px; position: relative; overflow: hidden; background: #fff; font-size: 14px; color: #2c3143; line-height: 20px; }
.alert { height: 106px; padding: 13px 15px; background: #f2dede; border: 1px solid #ebcccc; border-radius: 3px; color: #b84a4a; }
.alert h4 { margin: 0 0 7px; font-size: 14px; font-weight: bold; line-height: 20px; }
.alert p { margin: 0; }
.alert a { color: #2c85e0; }
.quote { margin: 20px 0 0; }
.columns { display: grid; grid-template-columns: 1fr 1fr; gap: 31px; height: 470px; }
.col-title { margin: 29px 0 9px; font-size: 21px; line-height: 22px; font-weight: bold; color: #2c85e0; }
.feed { border: 1px solid #dcdfe3; border-left: 0; border-radius: 4px; }
.feed-item { padding: 10px 20px 14px 20px; border-left: 5px solid #2c3143; border-bottom: 1px solid #dcdfe3; }
.feed-item:last-child { border-bottom: 0; }
.feed-blue { border-left-color: #2c7ec0; }
.feed-item a { display: block; color: #2c85e0; line-height: 18px; }
.feed-item b { display: block; line-height: 17px; font-size: 15px; color: #2c3143; }
.ic { width: 14px; height: 14px; vertical-align: -2px; fill: #2c3143; color: #2c3143; }
.ic-cap { width: 18px; }
.ic-cal { width: 13px; height: 15px; }
.chart { position: absolute; left: 96px; top: 651px; width: 1140px; height: 150px; background: #f7f8fa; }
.chart-title { height: 26px; text-align: center; line-height: 26px; font-size: 14px; color: #464c54; }
.chart-svg { display: block; }
.chart-svg text { font: 12px "Liberation Sans", sans-serif; fill: #52545c; }
.promo { position: absolute; left: 96px; top: 806px; width: 1140px; height: 100px; border: 1px solid #bbb; border-left: 5px solid #003399; border-radius: 3px; display: flex; }
.promo-text { width: 583px; padding: 27px 0 0 118px; }
.promo-text h3 { margin: 0 0 5px; font-size: 21px; line-height: 26px; color: #2c3143; white-space: nowrap; }
.promo-text p { margin: 0 0 0 13px; white-space: nowrap; }
.promo-logo { display: flex; align-items: flex-start; padding-top: 59px; color: #666; }
.promo-dots { display: flex; gap: 6.5px; }
.promo-dots i { width: 15px; height: 18px; border-radius: 50%; background: #666; }
.promo-word { font: 300 108px/1 "Lato", sans-serif; margin: -20px 0 0 16px; letter-spacing: 12px; }
.chat-btn {
  position: absolute; left: 1172px; top: 839px; width: 150px; height: 42px;
  background: #36bc98; color: #fff; border-radius: 8px 8px 0 0; text-align: center;
  font: 11.7px/40px "Open Sans", sans-serif; letter-spacing: 1.5px;
}
.hist-name { margin-top: 10px; font-size: 16.3px; font-weight: bold; line-height: 20px; }
.hist-empty { margin-top: 16px; line-height: 20px; font-size: 14px; }
.hist-info { margin-top: 33px; height: 72px; padding: 7px 4px 0 5px; background: #a6c8e0; border: 1px solid #5f9ac6; border-radius: 3px; display: flex; gap: 6px; line-height: 20px; font-size: 14px; color: #2c4a66; }
.hist-info b { color: #24496e; }
.hist-i { width: 15px; height: 24px; flex: none; }

/* ubuntu help */
.help {
  flex: 1; min-height: 0; position: relative; padding-left: 465px; background-color: #fff; overflow: hidden;
  background-image: radial-gradient(#cfcfcf .5px, transparent .8px); background-size: 4px 4px;
}
.help-page { width: 978px; height: 100%; background: #fff; box-shadow: 0 0 2px #ccc; font: 13.4px "Lato", sans-serif; color: #333; overflow: hidden; }
.help-thumb { position: absolute; right: 0; top: 0; width: 5px; height: 380px; background: #f08a64; }
.help-top { height: 20px; display: flex; justify-content: flex-end; gap: 16px; padding-right: 17px; font-size: 10.2px; line-height: 24px; color: #333; }
.help-bar {
  height: 64px; margin-right: 2px; display: flex; align-items: center; color: #fff; font-size: 14.6px; border-radius: 0 0 6px 6px; padding-left: 17px;
  background: repeating-linear-gradient(135deg, rgba(255,255,255,.05) 0 1px, transparent 1px 3px) top / 100% 30px no-repeat, #dd4814;
  box-shadow: 0 0 3px #ccc;
}
.hb-link { height: 64px; line-height: 64px; padding: 0 8px; white-space: nowrap; border-right: 1px solid #d0420f; }
.hb-active { background: #b93a12; width: 165px; }
.hb-brand { margin-left: auto; margin-right: 14px; font: 300 33px "Lato", sans-serif; white-space: nowrap; }
.hb-brand sup { font-size: 14px; vertical-align: 16px; }
.hb-brand small { font-size: 25.6px; }
.help-search { height: 40px; display: flex; background: #f2f2f2; }
.hs-blank { width: 676px; background: #fff; }
.hs-form { display: flex; gap: 6px; margin: 8px 0 0 12px; }
.hs-input { width: 185px; height: 26px; border: 1px solid #bbb; border-radius: 3px; background: linear-gradient(#f4f4f4, #fff); }
.hs-btn { width: 66px; height: 26px; border: 1px solid #ccc; border-radius: 3px; background: linear-gradient(#fff, #eee); text-align: center; line-height: 24px; font-size: 13.6px; color: #333; }
.crumbs { height: 31px; background: #f2f2f2; padding-left: 11px; line-height: 30px; font-size: 13px; white-space: nowrap; }
.crumbs a { color: #dd4814; }
.crumbs em { color: #aaa; font-style: normal; }
.crumb-ubu { width: 16px; height: 16px; vertical-align: 0; }
.article { padding: 0 81px 0 67px; line-height: 19.5px; }
.article h1 { font: 300 29.4px/38px "Lato", sans-serif; margin: 19px 0 0; color: #333; }
.lead { margin: 10px 0 0; }
.article h2 { font: 300 25.3px/32px "Lato", sans-serif; margin: 33px -10px 0; padding: 0 10px 9px; border-bottom: 1px solid #bbb; color: #333; }
.steps { margin: 7px 0 0; padding: 8px 20px 12px 32px; border-left: 3px solid #f9dc4e; box-shadow: 0 1px 3px #bbb; height: 217px; }
.steps li { margin-bottom: 7.5px; }
.steps p { margin: 8px 0 0; }
.ui { color: #8a8a8a; }
.act { color: #dd4814; border-bottom: 1px dotted #2c6cb0; }
.article h3 { font: 400 16px/20px "Lato", sans-serif; margin: 22px -10px 0; padding: 0 10px 8px; border-bottom: 1px solid #bbb; }
.quick { margin: 8px 0 0; }
.keys { margin: 8px 0 0; padding-left: 31px; }
.keys li { height: 27.5px; line-height: 27px; }
kbd { font: bold 13.4px "Lato", sans-serif; background: #e4e4e4; border: 1px solid #aaa; border-radius: 2px; box-shadow: 0 1px 2px #999; padding: 1px; }
.when { margin: 9px 0 0; }
code { font: 11.5px "DejaVu Sans Mono", monospace; }
.note { margin-top: 12px; height: 41px; padding: 0 0 0 49px; background: #f3f3f3; border: 1px solid #e8e8e8; line-height: 35px; position: relative; }
.note-ic { position: absolute; left: 16px; top: 10px; width: 18px; height: 18px; }
.also { margin: 13px 0 0; }
.article .h2-cast { border: 0; margin-top: 35px; }
```
